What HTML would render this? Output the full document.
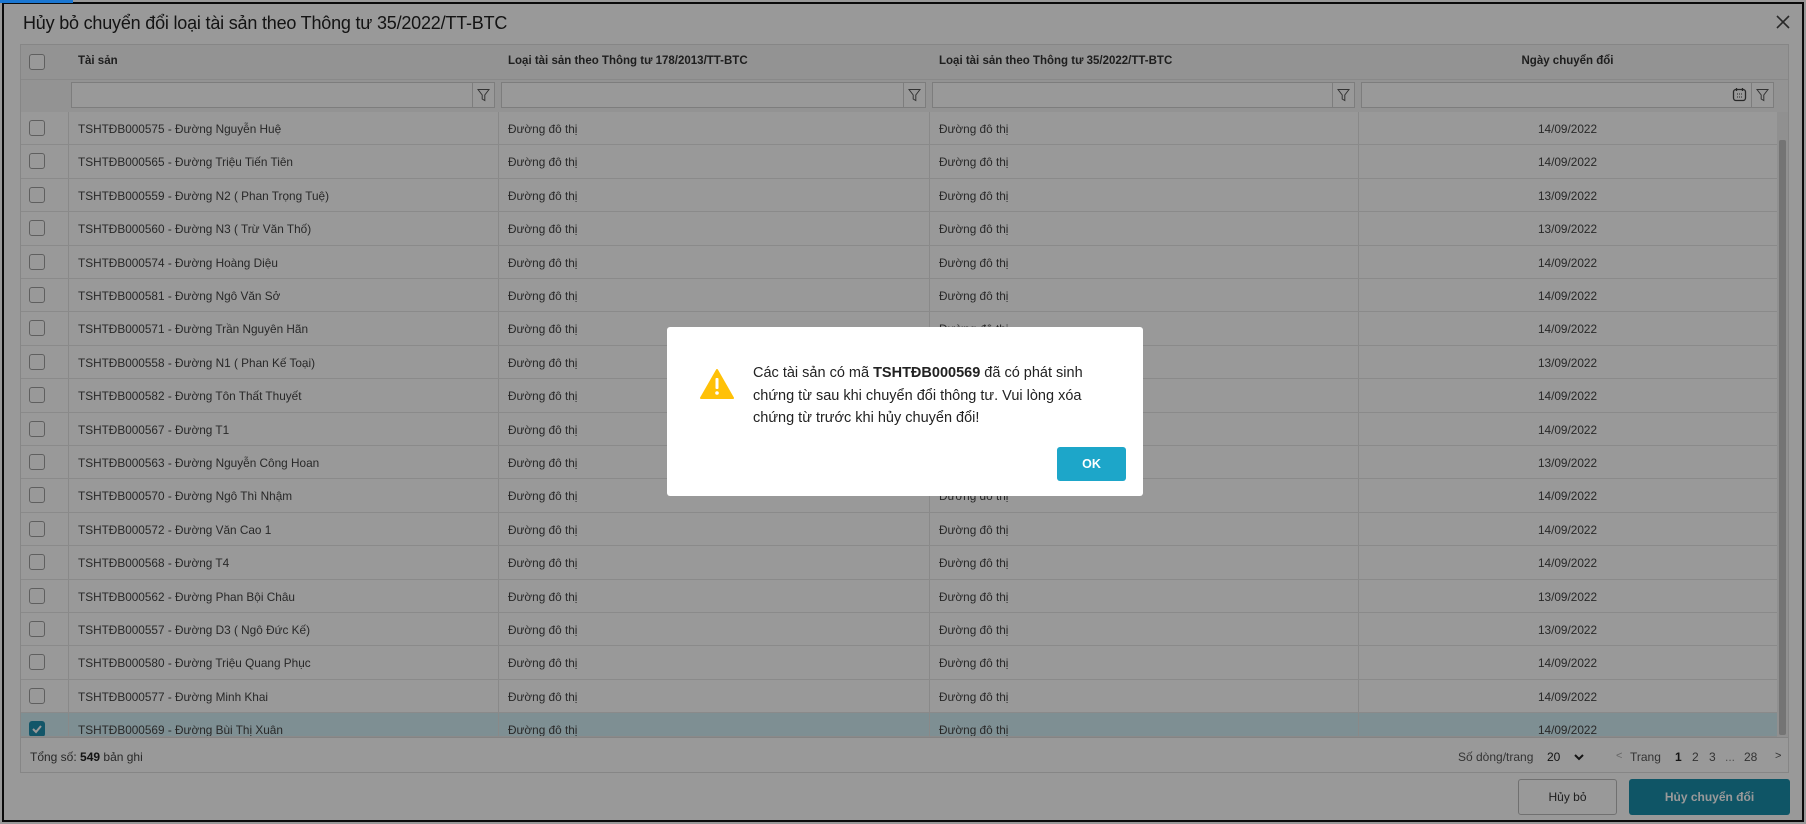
<!DOCTYPE html>
<html><head><meta charset="utf-8"><style>
*{box-sizing:border-box;margin:0;padding:0}
body{width:1806px;height:824px;overflow:hidden;background:#fff;font-family:"Liberation Sans",Arial,sans-serif;position:relative;color:#212121}
.a{position:absolute}
.frame{left:2px;top:2px;width:1802px;height:820px;border:2px solid #111;background:#fff}
.hdr{background:#f5f5f5}
.cb{width:16px;height:16px;border:1px solid #9e9e9e;border-radius:3px;background:#fff}
.cell{font-size:11.8px;color:#444;white-space:nowrap}
.hline{height:1px;background:#e4e4e4}
.vline{width:1px;background:#e4e4e4}
.inp{height:26px;border:1px solid #d0d0d0;background:#fff}
.fbtn{width:22px;height:26px;border-left:1px solid #d0d0d0}
.ov{left:0;top:0;width:1806px;height:824px;background:rgba(0,0,0,0.4)}
</style></head><body>
<div class="a frame"></div>
<div class="a" style="left:23px;top:13px;font-size:18px;letter-spacing:-0.2px;color:#222">Hủy bỏ chuyển đổi loại tài sản theo Thông tư 35/2022/TT-BTC</div>
<svg class="a" style="left:1775px;top:14px" width="16" height="16"><path d="M2 2L14 14M14 2L2 14" stroke="#444" stroke-width="1.6"/></svg>

<div class="a" style="left:20px;top:44px;width:1769px;height:729px;border:1px solid #e0e0e0;background:#fff"></div>
<div class="a hdr" style="left:21px;top:45px;width:1767px;height:67px"></div>
<div class="a hline" style="left:21px;top:79px;width:1767px"></div>
<div class="a cb" style="left:29px;top:54px"></div>
<div class="a" style="left:78px;top:55px;font-size:11.5px;font-weight:bold;color:#333">Tài sản</div>
<div class="a" style="left:508px;top:55px;font-size:11.5px;font-weight:bold;color:#333">Loại tài sản theo Thông tư 178/2013/TT-BTC</div>
<div class="a" style="left:939px;top:55px;font-size:11.5px;font-weight:bold;color:#333">Loại tài sản theo Thông tư 35/2022/TT-BTC</div>
<div class="a" style="left:1358px;width:419px;top:55px;font-size:11.5px;font-weight:bold;color:#333;text-align:center">Ngày chuyển đổi</div>
<div id="filters"></div>
<div id="rows"></div>
<div class="a" style="left:1777px;top:112px;width:11px;height:625px;background:#f0f0f0"></div>
<div class="a" style="left:1779px;top:140px;width:7px;height:595px;background:#c1c1c1;border-radius:2px"></div>
<div class="a hline" style="left:21px;top:737px;width:1767px;background:#ddd"></div>
<div class="a" style="left:30px;top:750px;font-size:12px;color:#444">Tổng số: <b style="color:#222">549</b> bản ghi</div>
<div class="a" style="left:1458px;top:750px;font-size:12px;color:#555">Số dòng/trang</div>
<div class="a" style="left:1547px;top:750px;font-size:12px;color:#222">20</div>
<svg class="a" style="left:1574px;top:753px" width="10" height="8"><path d="M1 2L5 6L9 2" stroke="#222" stroke-width="2" fill="none"/></svg>
<div class="a" style="left:1616px;top:750px;font-size:11px;color:#aaa">&lt;</div>
<div class="a" style="left:1630px;top:750px;font-size:12px;color:#555">Trang</div>
<div class="a" style="left:1675px;top:750px;font-size:12px;color:#222;font-weight:bold">1</div>
<div class="a" style="left:1692px;top:750px;font-size:12px;color:#555">2</div>
<div class="a" style="left:1709px;top:750px;font-size:12px;color:#555">3</div>
<div class="a" style="left:1725px;top:750px;font-size:12px;color:#888">...</div>
<div class="a" style="left:1744px;top:750px;font-size:12px;color:#555">28</div>
<div class="a" style="left:1775px;top:750px;font-size:11px;color:#555">&gt;</div>

<div class="a" style="left:1518px;top:779px;width:99px;height:36px;border:1px solid #bbb;border-radius:3px;background:#fff;font-size:12px;color:#333;text-align:center;line-height:34px">Hủy bỏ</div>
<div class="a" style="left:1629px;top:779px;width:161px;height:36px;border-radius:3px;background:#198eaa;font-size:12px;color:#fff;font-weight:bold;text-align:center;line-height:36px">Hủy chuyển đổi</div>

<div class="a ov"></div>
<div class="a" style="left:0;top:0;width:73px;height:3px;background:#1976d2"></div>

<div class="a" style="left:667px;top:327px;width:476px;height:169px;background:#fff;border-radius:3px"></div>
<svg class="a" style="left:699px;top:368px" width="36" height="32"><path d="M18 2L34 30H2Z" fill="#ffc107" stroke="#ffc107" stroke-width="2" stroke-linejoin="round"/><rect x="16.5" y="10" width="3" height="11" rx="1" fill="#fff"/><circle cx="18" cy="25" r="1.8" fill="#fff"/></svg>
<div class="a" style="left:753px;top:362px;width:335px;font-size:14.5px;line-height:22.5px;color:#222">Các tài sản có mã <b>TSHTĐB000569</b> đã có phát sinh chứng từ sau khi chuyển đổi thông tư. Vui lòng xóa chứng từ trước khi hủy chuyển đổi!</div>
<div class="a" style="left:1057px;top:447px;width:69px;height:34px;background:#1da6c9;border-radius:3px;color:#fff;font-weight:bold;font-size:12.5px;text-align:center;line-height:34px">OK</div>

<script>
var f='';
var cols=[[68,498],[498,929],[929,1358],[1358,1777]];
cols.forEach(function(c,i){
 var l=c[0]+3,w=c[1]-c[0]-6;
 f+='<div class="a inp" style="left:'+l+'px;top:82px;width:'+w+'px"></div>';
 f+='<div class="a fbtn" style="left:'+(l+w-23)+'px;top:82px"></div>';
 f+='<svg class="a" style="left:'+(l+w-18)+'px;top:88px" width="13" height="14"><path d="M1 1.5H12L7.8 7V12.5L5.2 11V7Z" fill="none" stroke="#555" stroke-width="1"/></svg>';
 if(i==3){f+='<svg class="a" style="left:'+(l+w-42)+'px;top:87px" width="15" height="15"><rect x="1.5" y="2.5" width="12" height="11" rx="2.5" fill="none" stroke="#444" stroke-width="1.3"/><path d="M4.5 1V4M10.5 1V4" stroke="#444" stroke-width="1.3"/><path d="M5 7h1M7 7h1M9 7h1M5 10h1M7 10h1M9 10h1" stroke="#444"/></svg>';}
});
document.getElementById('filters').innerHTML=f;
var d=[["575","Nguyễn Huệ","14"],["565","Triệu Tiến Tiên","14"],["559","N2 ( Phan Trọng Tuệ)","13"],["560","N3 ( Trừ Văn Thố)","13"],["574","Hoàng Diệu","14"],["581","Ngô Văn Sở","14"],["571","Trần Nguyên Hãn","14"],["558","N1 ( Phan Kế Toại)","13"],["582","Tôn Thất Thuyết","14"],["567","T1","14"],["563","Nguyễn Công Hoan","13"],["570","Ngô Thì Nhậm","14"],["572","Văn Cao 1","14"],["568","T4","14"],["562","Phan Bội Châu","13"],["557","D3 ( Ngô Đức Kế)","13"],["580","Triệu Quang Phục","14"],["577","Minh Khai","14"],["569","Bùi Thị Xuân","14"]];
var h='';
d.forEach(function(r,i){
 var t=112+i*33.4, hh=(i==18)?(737-t):33.4;
 var sel=i==18;
 h+='<div class="a" style="left:21px;top:'+t+'px;width:1756px;height:'+hh+'px;background:'+(sel?'#d3eef5':'#fff')+';border-bottom:1px solid #e6e6e6;overflow:hidden">';
 h+='<div class="a vline" style="left:47px;top:0;height:34px"></div><div class="a vline" style="left:477px;top:0;height:34px"></div><div class="a vline" style="left:908px;top:0;height:34px"></div><div class="a vline" style="left:1337px;top:0;height:34px"></div>';
 if(sel) h+='<div class="a" style="left:8px;top:8px;width:16px;height:16px;background:#1f8fb0;border-radius:3px"><svg width="16" height="16"><path d="M4 8L7 11L12 5" stroke="#fff" stroke-width="2" fill="none"/></svg></div>';
 else h+='<div class="a cb" style="left:8px;top:8px"></div>';
 h+='<div class="a cell" style="left:57px;top:10px">TSHTĐB000'+r[0]+' - Đường '+r[1]+'</div>';
 h+='<div class="a cell" style="left:487px;top:10px">Đường đô thị</div>';
 h+='<div class="a cell" style="left:918px;top:10px">Đường đô thị</div>';
 h+='<div class="a cell" style="left:1337px;width:419px;text-align:center;top:10px">'+r[2]+'/09/2022</div>';
 h+='</div>';
});
document.getElementById('rows').innerHTML=h;
</script>
</body></html>
